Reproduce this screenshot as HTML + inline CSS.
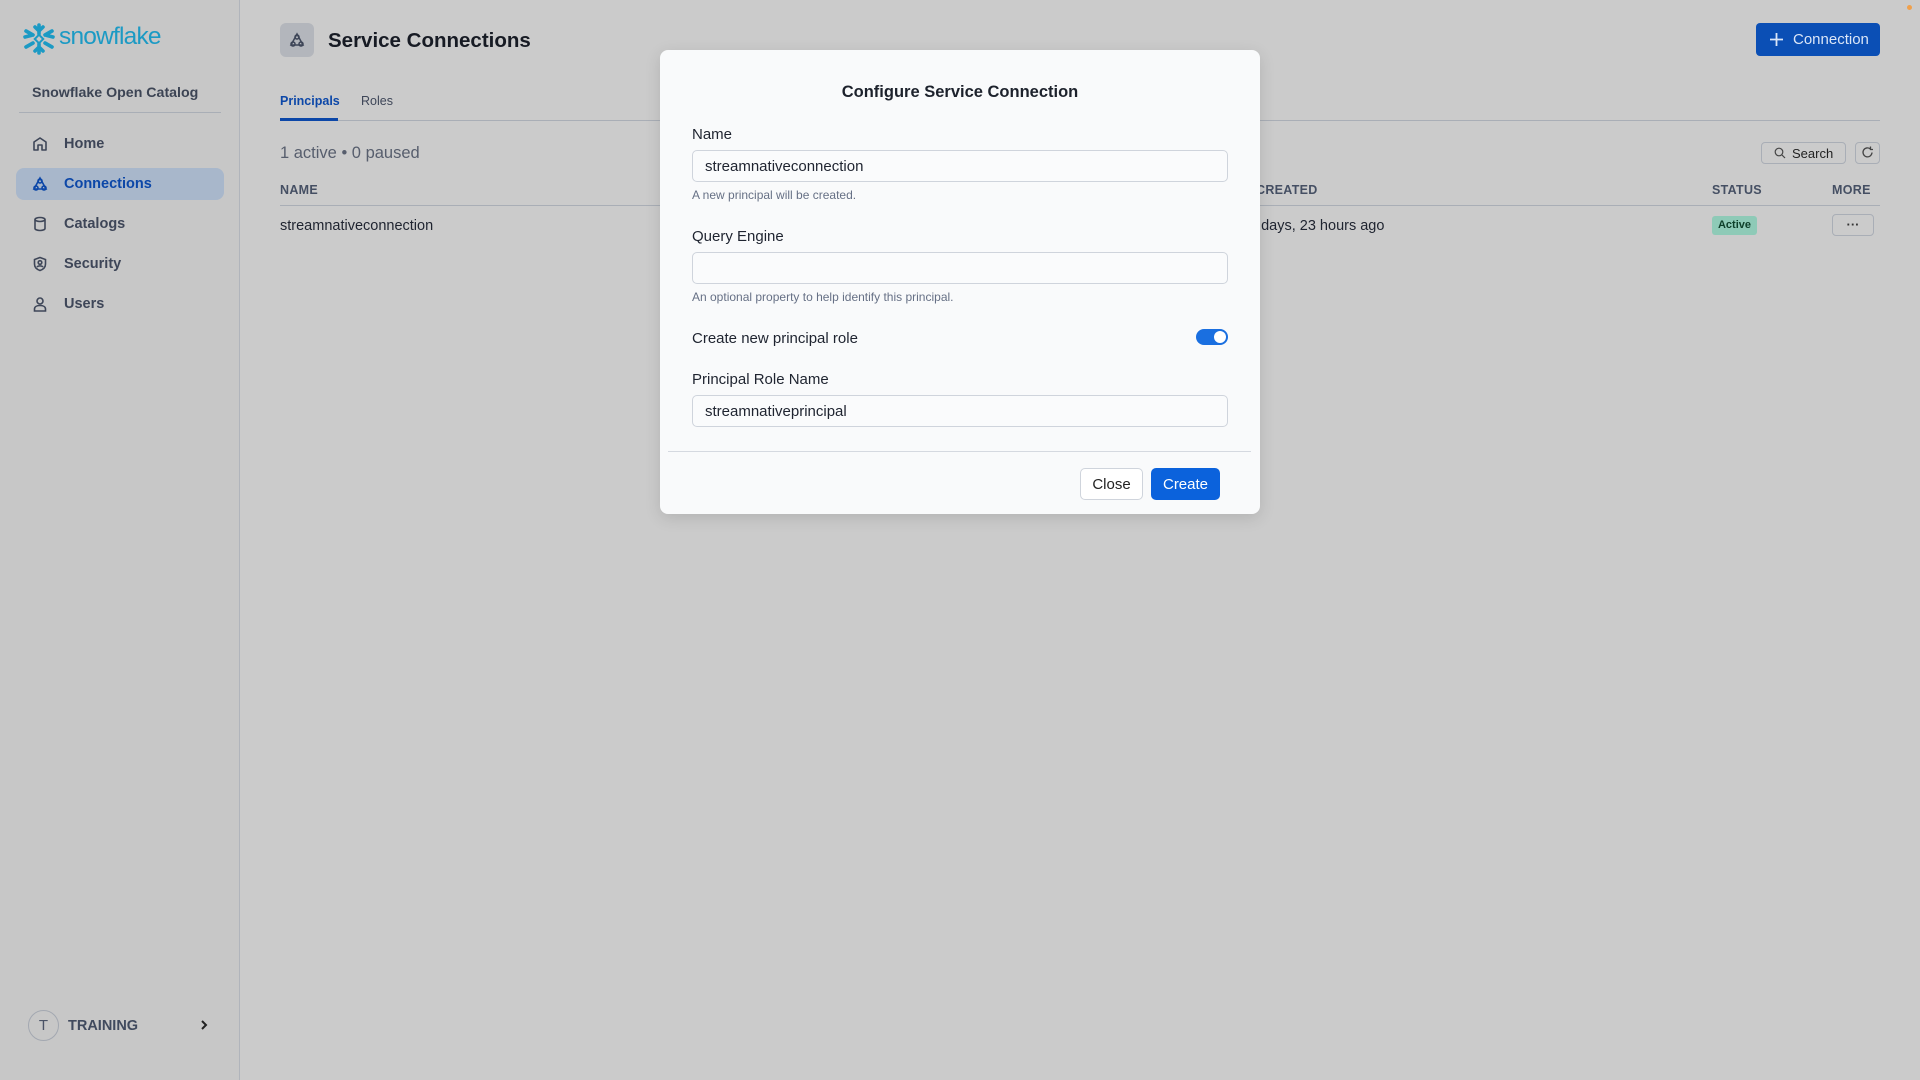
<!DOCTYPE html>
<html><head><meta charset="utf-8"><style>
*{box-sizing:border-box;margin:0;padding:0}
body{width:1920px;height:1080px;overflow:hidden;background:#cbcbcb;font-family:"Liberation Sans",Arial,sans-serif;color:#1f2430;position:relative}
.abs{position:absolute}
.side{left:0;top:0;width:240px;height:1080px;background:#c7c7c7;border-right:1px solid #b0b4bb}
.nav{position:absolute;left:16px;width:208px;height:32px;display:flex;align-items:center;font-size:14.5px;font-weight:bold;color:#3e4658}
.nav svg{position:absolute;left:16px}
.nav span{position:absolute;left:48px}
.nav.act{background:#a8b7cb;border-radius:8px;color:#0c47a8}
.th{font-size:12.5px;font-weight:bold;color:#454f63;letter-spacing:.3px}
.modal{left:660px;top:50px;width:600px;height:464px;background:#f9fafb;border-radius:8px;box-shadow:0 4px 16px rgba(0,0,0,.12)}
.lbl{position:absolute;left:32px;font-size:15px;color:#1f2430}
.inp{position:absolute;left:32px;width:536px;height:32px;border:1px solid #cfd4dc;border-radius:5px;background:#fafbfc;font-size:15px;padding-left:12px;line-height:31px;color:#1f2430}
.hint{position:absolute;left:32px;font-size:12px;color:#667085}
</style></head><body>
<div class="abs side">
  <svg class="abs" style="left:22px;top:22px" width="34" height="34" viewBox="0 0 34 34">
    <g stroke="#1c9ac4" stroke-linecap="round" fill="none">
      <path d="M17 3v9M13 5l4 4 4-4" stroke-width="3.6"/>
      <path d="M17 31v-9M13 29l4-4 4 4" stroke-width="3.6"/>
      <path d="M4 9l7 4M3 15l6-1.5" stroke-width="3.6"/>
      <path d="M30 9l-7 4M31 15l-6-1.5" stroke-width="3.6"/>
      <path d="M4 25l7-4M30 25l-7-4" stroke-width="3.6"/>
    </g>
    <rect x="14" y="14" width="6" height="6" transform="rotate(45 17 17)" fill="none" stroke="#1c9ac4" stroke-width="2"/>
  </svg>
  <div class="abs" style="left:59px;top:23px;font-size:24.5px;color:#1c9ac4;letter-spacing:-.8px">snowflake</div>
  <div class="abs" style="left:32px;top:85px;font-size:14.2px;font-weight:bold;color:#3c4454">Snowflake Open Catalog</div>
  <div class="abs" style="left:19px;top:112px;width:202px;height:1px;background:#a9aeb6"></div>
  <div class="nav" style="top:128px"><svg width="16" height="16" viewBox="0 0 16 16" fill="none" stroke="#3e4658" stroke-width="1.6"><path d="M2 14V6l6-4 6 4v8h-4V9H6v5z" stroke-linejoin="round"/></svg><span>Home</span></div>
  <div class="nav act" style="top:168px"><svg width="16" height="16" viewBox="0 0 16 16" fill="none" stroke="#0c47a8" stroke-width="1.6"><path d="M8 2L2 13h12z"/><circle cx="8" cy="5" r="2"/><circle cx="4" cy="12" r="2"/><circle cx="12" cy="12" r="2"/></svg><span>Connections</span></div>
  <div class="nav" style="top:208px"><svg width="16" height="16" viewBox="0 0 16 16" fill="none" stroke="#3e4658" stroke-width="1.6"><ellipse cx="8" cy="3.5" rx="5" ry="2"/><path d="M3 3.5v9c0 1.1 2.2 2 5 2s5-.9 5-2v-9"/></svg><span>Catalogs</span></div>
  <div class="nav" style="top:248px"><svg width="16" height="16" viewBox="0 0 16 16" fill="none" stroke="#3e4658" stroke-width="1.6"><path d="M8 1.5l5.5 2v4.5c0 3.5-2.5 5.5-5.5 6.5C5 13.5 2.5 11.5 2.5 8V3.5z"/><circle cx="8" cy="6.5" r="1.8"/><path d="M5 11c1-1.5 5-1.5 6 0"/></svg><span>Security</span></div>
  <div class="nav" style="top:288px"><svg width="16" height="16" viewBox="0 0 16 16" fill="none" stroke="#3e4658" stroke-width="1.6"><circle cx="8" cy="5" r="3"/><path d="M2.5 15v-2c0-2 2-3.5 5.5-3.5s5.5 1.5 5.5 3.5v2z"/></svg><span>Users</span></div>
  <div class="abs" style="left:28px;top:1010px;width:31px;height:31px;border:1px solid #a3a8b1;border-radius:50%;text-align:center;line-height:29px;font-size:15px;color:#4a5366">T</div>
  <div class="abs" style="left:68px;top:1018px;font-size:14.5px;font-weight:bold;color:#404a5e">TRAINING</div>
  <svg class="abs" style="left:199px;top:1018px" width="10" height="14" viewBox="0 0 10 14"><path d="M3 3l4 4-4 4" fill="none" stroke="#222" stroke-width="2"/></svg>
</div>

<div class="abs" style="left:280px;top:23px;width:34px;height:34px;background:#b3b6bc;border-radius:6px"></div>
<svg class="abs" style="left:289px;top:32px" width="16" height="16" viewBox="0 0 16 16" fill="none" stroke="#3e4658" stroke-width="1.5"><path d="M8 2L2 13h12z"/><circle cx="8" cy="5" r="2"/><circle cx="4" cy="12" r="2"/><circle cx="12" cy="12" r="2"/></svg>
<div class="abs" style="left:328px;top:29px;font-size:20.5px;font-weight:bold;color:#171b24">Service Connections</div>
<div class="abs" style="left:1756px;top:23px;width:124px;height:33px;background:#0b4fb5;border-radius:4px;color:#dbe6f7;font-size:15px;line-height:34px;padding-left:37px">Connection</div>
<svg class="abs" style="left:1769px;top:32px" width="15" height="15" viewBox="0 0 15 15"><path d="M7.5 1v13M1 7.5h13" stroke="#dbe6f7" stroke-width="1.8"/></svg>

<div class="abs" style="left:280px;top:94px;font-size:12.5px;font-weight:bold;color:#0c47a8">Principals</div>
<div class="abs" style="left:361px;top:94px;font-size:12.5px;color:#3e4658">Roles</div>
<div class="abs" style="left:280px;top:120px;width:1600px;height:1px;background:#a9aeb6"></div>
<div class="abs" style="left:280px;top:118px;width:58px;height:3px;background:#0c47a8"></div>

<div class="abs" style="left:280px;top:144px;font-size:16.5px;color:#575e6d">1 active • 0 paused</div>
<div class="abs" style="left:1761px;top:142px;width:85px;height:22px;border:1px solid #a9aeb6;border-radius:4px;font-size:13px;line-height:21px;padding-left:30px;color:#222">Search</div>
<svg class="abs" style="left:1774px;top:147px" width="12" height="12" viewBox="0 0 12 12" fill="none" stroke="#444" stroke-width="1.2"><circle cx="5" cy="5" r="3.8"/><path d="M8 8l3 3"/></svg>
<div class="abs" style="left:1855px;top:142px;width:25px;height:22px;border:1px solid #a9aeb6;border-radius:4px"></div>
<svg class="abs" style="left:1861px;top:146px" width="13" height="13" viewBox="0 0 13 13" fill="none" stroke="#444" stroke-width="1.3"><path d="M11 6.5A4.5 4.5 0 1 1 9.5 3"/><path d="M9.5 0.5V3.5H12"/></svg>

<div class="abs th" style="left:280px;top:183px">NAME</div>
<div class="abs th" style="left:1256px;top:183px">CREATED</div>
<div class="abs th" style="left:1712px;top:183px">STATUS</div>
<div class="abs th" style="left:1832px;top:183px">MORE</div>
<div class="abs" style="left:280px;top:205px;width:1600px;height:1px;background:#a9aeb6"></div>
<div class="abs" style="left:280px;top:218px;font-size:14.5px;color:#1f2430">streamnativeconnection</div>
<div class="abs" style="left:1249px;top:218px;font-size:14.5px;color:#1f2430">3 days, 23 hours ago</div>
<div class="abs" style="left:1712px;top:216px;width:45px;height:19px;background:#8ecab7;border-radius:3px;font-size:11px;font-weight:bold;color:#0e3f2a;text-align:center;line-height:19px">Active</div>
<div class="abs" style="left:1832px;top:214px;width:42px;height:22px;border:1px solid #a9aeb6;border-radius:4px;text-align:center;font-size:13px;line-height:19px;font-weight:bold;color:#333">···</div>
<div class="abs" style="left:1907px;top:5px;width:5px;height:5px;border-radius:50%;background:#f0a04b"></div>

<div class="abs modal">
  <div class="abs" style="left:0;top:33px;width:600px;text-align:center;font-size:16.5px;font-weight:bold;color:#1d222c">Configure Service Connection</div>
  <div class="lbl" style="top:76px">Name</div>
  <div class="inp" style="top:100px">streamnativeconnection</div>
  <div class="hint" style="top:138px">A new principal will be created.</div>
  <div class="lbl" style="top:178px">Query Engine</div>
  <div class="inp" style="top:202px"></div>
  <div class="hint" style="top:240px">An optional property to help identify this principal.</div>
  <div class="lbl" style="top:280px">Create new principal role</div>
  <div class="abs" style="left:536px;top:279px;width:32px;height:16px;border-radius:8px;background:#1a6fe0"></div>
  <div class="abs" style="left:554px;top:281px;width:12px;height:12px;border-radius:50%;background:#fff"></div>
  <div class="lbl" style="top:321px">Principal Role Name</div>
  <div class="inp" style="top:345px">streamnativeprincipal</div>
  <div class="abs" style="left:8px;top:401px;width:583px;height:1px;background:#d5d9e0"></div>
  <div class="abs" style="left:420px;top:418px;width:63px;height:32px;border:1px solid #cfd4dc;border-radius:5px;background:#fff;text-align:center;line-height:31px;font-size:15px;color:#222">Close</div>
  <div class="abs" style="left:491px;top:418px;width:69px;height:32px;border-radius:5px;background:#0b62dc;text-align:center;line-height:33px;font-size:15px;color:#fff">Create</div>
</div>
</body></html>
